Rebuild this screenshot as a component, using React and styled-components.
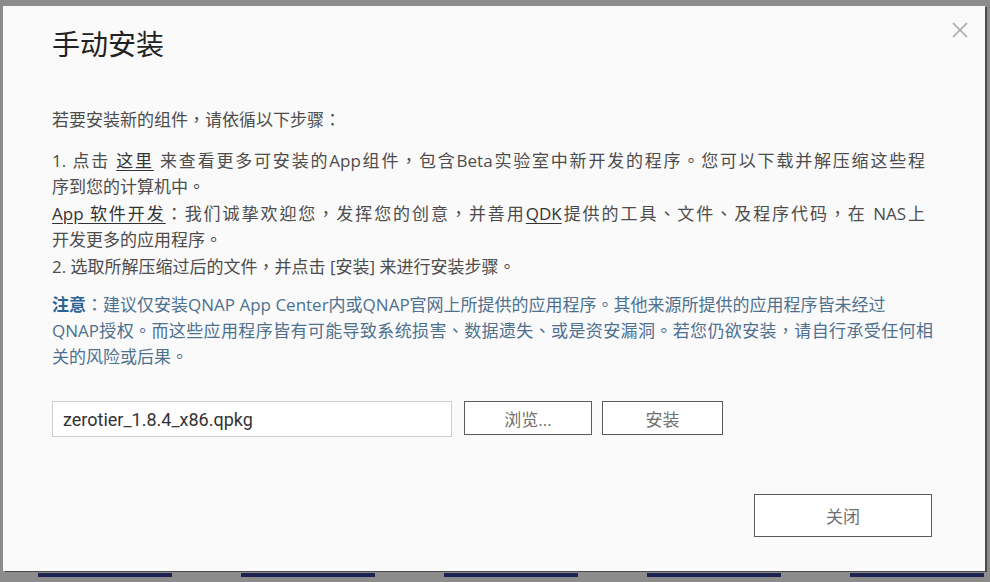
import React from "react";
import styled, { createGlobalStyle } from "styled-components";

const GlobalStyle = createGlobalStyle`
  html, body {
    margin: 0;
    padding: 0;
    background: #8c8c8c;
  }
  * {
    box-sizing: border-box;
  }
`;

const Screen = styled.div`
  width: 990px;
  height: 582px;
  padding: 6px 5px 0 3px;
  overflow: hidden;
`;

const Dialog = styled.div`
  position: relative;
  width: 982px;
  height: 565px;
  background: #fafafa;
  box-shadow: 2px 1px 0 #4a4a4a;
  padding: 19px 60px 0 49px;
  font-family: "Open Sans", "Noto Sans CJK TC", "Noto Sans CJK SC", sans-serif;
  color: #4d4d4d;
`;

const CloseIcon = styled.div`
  position: absolute;
  top: 16px;
  right: 17px;
  width: 16px;
  height: 16px;
  display: flex;
`;

const Title = styled.h1`
  margin: 0;
  font-family: "Noto Sans CJK TC", "Noto Sans CJK SC", sans-serif;
  font-size: 28px;
  line-height: 36px;
  font-weight: 400;
  color: #222;
`;

const Intro = styled.p`
  margin: 46px 0 0;
  font-size: 17px;
  line-height: 26.5px;
`;

const StepList = styled.div`
  margin-top: 14px;
  font-size: 17px;
  line-height: 26.5px;
`;

const Line = styled.span`
  display: block;
  white-space: nowrap;
  text-align: ${(p) => (p.$justify ? "justify" : "left")};
  text-align-last: ${(p) => (p.$justify ? "justify" : "auto")};
`;

const Link = styled.span`
  text-decoration: underline;
  text-underline-offset: 3px;
  color: #333;
`;

const Note = styled.p`
  margin: 12px -8px 0 0;
  font-size: 17px;
  line-height: 26px;
  color: #4e7190;
  > span > strong {
    font-weight: 700;
    color: #2c6397;
  }
`;

const UploadRow = styled.div`
  margin-top: 31px;
  display: flex;
  align-items: flex-start;
  gap: 10px;
`;

const FileField = styled.input`
  width: 400px;
  height: 36px;
  border: 1px solid #cfcfcf;
  background: #fff;
  padding: 0 10px;
  font-family: Roboto, sans-serif;
  font-size: 18px;
  color: #333;
  outline: none;
  margin-right: 2px;
`;

const Button = styled.button`
  width: ${(p) => p.$width}px;
  height: ${(p) => p.$height || 34}px;
  border: 1.5px solid #5a5a5a;
  background: #fff;
  font-family: "Open Sans", "Noto Sans CJK TC", "Noto Sans CJK SC", sans-serif;
  font-size: 17px;
  color: #707070;
  padding: 0;
  cursor: pointer;
`;

const Footer = styled.div`
  margin-top: 57px;
  margin-right: -7px;
  display: flex;
  justify-content: flex-end;
`;

const Taskbar = styled.div`
  height: 11px;
  margin: 1px -5px 0 -3px;
  background: repeating-linear-gradient(
    to right,
    transparent 0,
    transparent 38px,
    #1c2350 38px,
    #1c2350 172px,
    transparent 172px,
    transparent 203px
  );
  background-size: 100% 4px;
  background-repeat: no-repeat;
  background-position: 0 1px;
`;

const App = () => {
  return (
    <Screen>
      <GlobalStyle />
      <Dialog lang="zh-TW">
        <CloseIcon aria-label="close">
          <svg width="16" height="16" viewBox="0 0 16 16">
            <path d="M1 1 L15 15 M15 1 L1 15" stroke="#a8a8a8" strokeWidth="1.6" fill="none" />
          </svg>
        </CloseIcon>
        <Title>手动安装</Title>
        <Intro>若要安装新的组件，请依循以下步骤：</Intro>
        <StepList>
          <Line $justify>
            1. 点击 <Link>这里</Link> 来查看更多可安装的App组件，包含Beta实验室中新开发的程序。您可以下载并解压缩这些程
          </Line>
          <Line>序到您的计算机中。</Line>
          <Line $justify>
            <Link>App 软件开发</Link>：我们诚挚欢迎您，发挥您的创意，并善用<Link>QDK</Link>提供的工具、文件、及程序代码，在 NAS上
          </Line>
          <Line>开发更多的应用程序。</Line>
          <Line>2. 选取所解压缩过后的文件，并点击 [安装] 来进行安装步骤。</Line>
        </StepList>
        <Note>
          <Line>
            <strong>注意</strong>：建议仅安装QNAP App Center内或QNAP官网上所提供的应用程序。其他来源所提供的应用程序皆未经过
          </Line>
          <Line $justify>
            QNAP授权。而这些应用程序皆有可能导致系统损害、数据遗失、或是资安漏洞。若您仍欲安装，请自行承受任何相
          </Line>
          <Line>关的风险或后果。</Line>
        </Note>
        <UploadRow>
          <FileField readOnly value="zerotier_1.8.4_x86.qpkg" />
          <Button $width={128}>浏览...</Button>
          <Button $width={121}>安装</Button>
        </UploadRow>
        <Footer>
          <Button $width={178} $height={43}>关闭</Button>
        </Footer>
      </Dialog>
      <Taskbar />
    </Screen>
  );
};

export default App;
